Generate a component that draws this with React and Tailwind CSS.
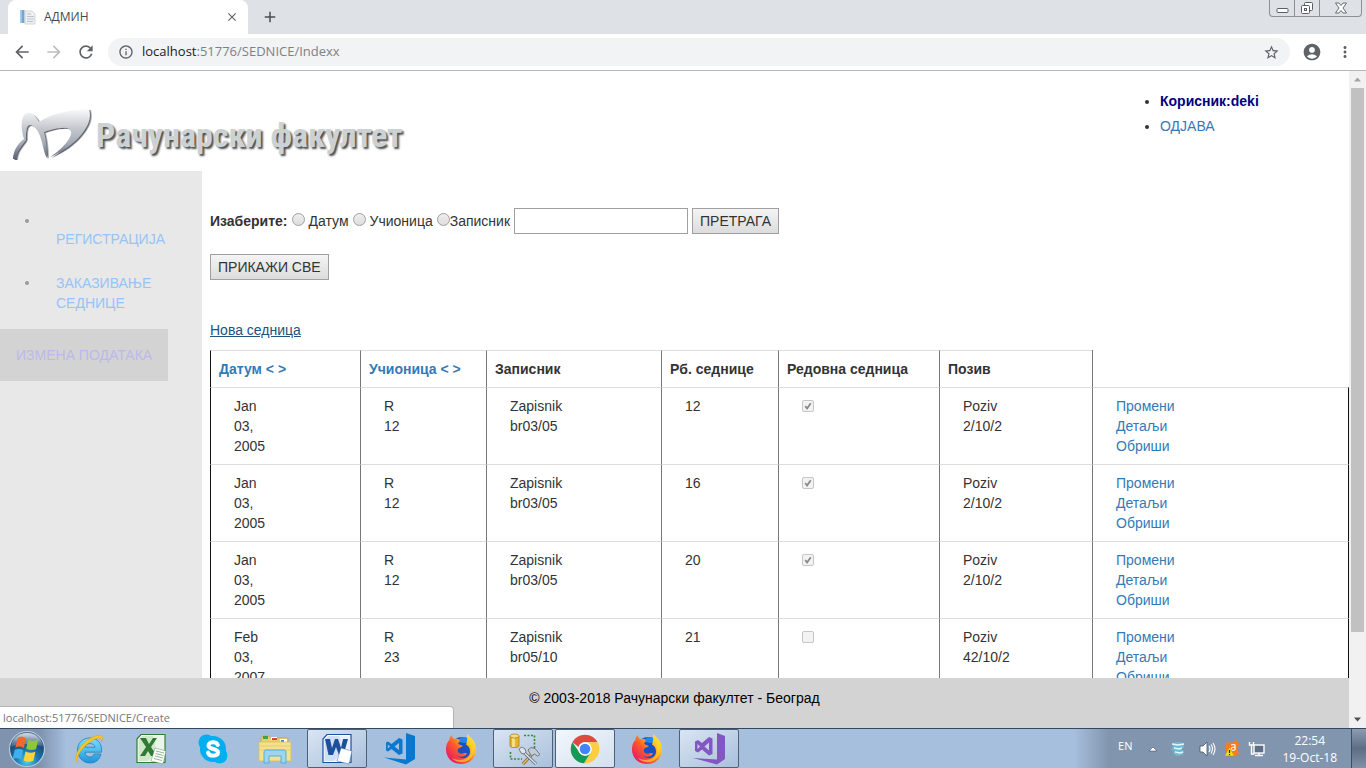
import React from 'react';
import { MdArrowBack, MdArrowForward, MdRefresh, MdInfoOutline, MdStarBorder, MdAccountCircle, MdMoreVert, MdClose, MdAdd } from 'react-icons/md';

const ROWS = [
  { date: ['Jan', '03,', '2005'], room: ['R', '12'], minutes: ['Zapisnik', 'br03/05'], no: 12, regular: true, call: ['Poziv', '2/10/2'] },
  { date: ['Jan', '03,', '2005'], room: ['R', '12'], minutes: ['Zapisnik', 'br03/05'], no: 16, regular: true, call: ['Poziv', '2/10/2'] },
  { date: ['Jan', '03,', '2005'], room: ['R', '12'], minutes: ['Zapisnik', 'br03/05'], no: 20, regular: true, call: ['Poziv', '2/10/2'] },
  { date: ['Feb', '03,', '2007'], room: ['R', '23'], minutes: ['Zapisnik', 'br05/10'], no: 21, regular: false, call: ['Poziv', '42/10/2'] },
];

function Lines({ items }) {
  return items.map((t) => <span key={t} className="block">{t}</span>);
}

/* ---------- browser chrome ---------- */

function TabStrip() {
  return (
    <div className="flex h-[34px] shrink-0 items-start bg-[#dee1e6]">
      <div className="ml-2 flex h-full w-[240px] items-center rounded-t-lg bg-white pr-[9px] pl-3">
        <svg width="16" height="16" viewBox="0 0 16 16" aria-hidden="true">
          <rect x="0.5" y="1" width="4" height="13" fill="#6fa8d6" />
          <rect x="0.5" y="1" width="1.5" height="13" fill="#9cc4e4" />
          <path d="M5 2h7l3 3v10H5z" fill="#eef0f2" stroke="#c9ced3" strokeWidth="0.8" />
          <path d="M7 5h4M7 7.5h7M7 10h7M7 12.5h6" stroke="#b6bdc4" strokeWidth="0.9" />
        </svg>
        <span className="ml-2 flex-1 text-xs text-[#45494d]">АДМИН</span>
        <button aria-label="Затвори картицу" className="text-[#5f6368]"><MdClose size={14} /></button>
      </div>
      <button aria-label="Нова картица" className="mt-2 ml-[13px] text-[#4a4d51]"><MdAdd size={18} /></button>
      <div className="mr-1 ml-auto flex h-[17px] overflow-hidden rounded-b border border-t-0 border-[#8b9097]">
        <button aria-label="Умањи" className="flex w-[25px] items-center justify-center border-r border-[#8b9097]">
          <svg width="13" height="12" viewBox="0 0 13 12"><rect x="1" y="6.5" width="11" height="4" rx="1" fill="#fff" stroke="#5a5f66" /></svg>
        </button>
        <button aria-label="Врати величину" className="flex w-[25px] items-center justify-center border-r border-[#8b9097]">
          <svg width="14" height="14" viewBox="0 0 14 14" fill="#fff" stroke="#5a5f66">
            <rect x="4.500" y="1.500" width="8" height="8" rx="1" />
            <rect x="1.500" y="4.500" width="8" height="8" rx="1" />
            <rect x="4.500" y="7.500" width="2" height="2" />
          </svg>
        </button>
        <button aria-label="Затвори" className="flex w-[41px] items-center justify-center">
          <svg width="14" height="12" viewBox="0 0 14 12"><path d="M1.500 1h3.500l2 2.500L9 1h3.500L9 6l3.500 5H9L7 8.500 5 11H1.500L5 6z" fill="#fff" stroke="#5a5f66" strokeWidth="0.9" /></svg>
        </button>
      </div>
    </div>
  );
}

function Toolbar() {
  return (
    <div className="flex h-[37px] shrink-0 items-center border-b border-[#b4b6b9] bg-white pr-3 pl-3 text-[#5f6368]">
      <button aria-label="Назад"><MdArrowBack size={20} /></button>
      <button aria-label="Напред" className="ml-3 text-[#bcbec1]"><MdArrowForward size={20} /></button>
      <button aria-label="Освежи" className="ml-3"><MdRefresh size={20} /></button>
      <div className="ml-3 flex h-7 flex-1 items-center rounded-full bg-[#f1f3f4] px-[10px]">
        <MdInfoOutline size={16} />
        <span className="ml-2 flex-1 text-[13px] text-[#7d8186]">
          <span className="text-[#202124]">localhost</span>:51776/SEDNICE/Indexx
        </span>
        <button aria-label="Обележи страницу"><MdStarBorder size={17} /></button>
      </div>
      <button aria-label="Профил" className="ml-3"><MdAccountCircle size={20} /></button>
      <button aria-label="Мени" className="ml-[14px]"><MdMoreVert size={18} /></button>
    </div>
  );
}

function Scrollbar() {
  return (
    <div className="flex w-[17px] shrink-0 flex-col items-center bg-[#f1f1f1]" aria-hidden="true">
      <svg className="h-[17px] w-[17px] shrink-0" viewBox="0 0 17 17"><path d="M5 10.500l3.500-4 3.500 4z" fill="#a3a3a3" /></svg>
      <div className="w-[13px] flex-[544_1_0%] bg-[#c1c1c1]" />
      <div className="flex-[79_1_0%]" />
      <svg className="h-[17px] w-[17px] shrink-0" viewBox="0 0 17 17"><path d="M5 6.500l3.500 4 3.500-4z" fill="#505050" /></svg>
    </div>
  );
}

/* ---------- page ---------- */

function Logo() {
  return (
    <div className="flex items-center pt-9 pl-3">
      <svg width="84" height="56" viewBox="0 0 84 56" className="shrink-0" aria-hidden="true">
        <defs>
          <linearGradient id="metal" x1="0" y1="0" x2="0" y2="1">
            <stop offset="0" stopColor="#fafafb" />
            <stop offset="0.4" stopColor="#c3c7cd" />
            <stop offset="0.7" stopColor="#a3aab5" />
            <stop offset="1" stopColor="#596276" />
          </linearGradient>
          <filter id="soft" x="-10%" y="-10%" width="130%" height="130%">
            <feDropShadow dx="1.500" dy="1" stdDeviation="0.7" floodColor="#3a3e46" floodOpacity="0.8" />
          </filter>
        </defs>
        <path
          filter="url(#soft)"
          fill="url(#metal)"
          d="M1 52C1 45 5 37 12 32C9 22 8 9 15 6C20 5 24 10 27 15C38 7 56 3 77 2C80 12 75 21 68 29C61 37 52 44 38 50C46 45 53 38 57 32C62 24 58 20 50 21C44 21 38 23 32 25C34 33 35 42 35 51C32 47 31 37 28 29C26 23 22 18 18 18C14 18 14 25 14 32C12 38 5 41 4 52Z"
        />
      </svg>
      <span className="font-['Roboto_Condensed','Liberation_Sans_Narrow','Liberation_Sans',sans-serif] text-[34px] leading-[56px] font-bold whitespace-nowrap text-[#ccd2d3] [text-shadow:2px_2px_2px_#4a4d50]">
        Рачунарски факултет
      </span>
    </div>
  );
}

function PageHeader() {
  return (
    <header className="flex h-[100px] shrink-0 items-start justify-between">
      <Logo />
      <ul className="w-[189px] list-disc pt-5 leading-5 text-[#333]">
        <li className="mb-[5px]"><b className="text-[#00007f]">Корисник:deki</b></li>
        <li><a href="#odjava" className="text-[#337ab7]">ОДЈАВА</a></li>
      </ul>
    </header>
  );
}

function Sidebar() {
  return (
    <nav className="w-[202px] shrink-0 bg-[#e8e8e8] pt-10 leading-5">
      <ul className="pr-4 pl-[25px] text-[#94c4f8]">
        <li className="mb-6 flex gap-[27px]">
          <span className="mt-2 h-1 w-1 shrink-0 rounded-full bg-[#999]" />
          <a href="#registracija" className="pt-[18px]">РЕГИСТРАЦИЈА</a>
        </li>
        <li className="flex gap-[27px]">
          <span className="mt-2 h-1 w-1 shrink-0 rounded-full bg-[#999]" />
          <a href="#zakazivanje">ЗАКАЗИВАЊЕ СЕДНИЦЕ</a>
        </li>
      </ul>
      <a href="#izmena" className="mt-4 block w-[168px] bg-[#d3d3d3] p-4 whitespace-nowrap text-[#bdb8ec]">ИЗМЕНА ПОДАТАКА</a>
    </nav>
  );
}

function Radio({ id }) {
  return (
    <input
      id={id}
      type="radio"
      name="kriterijum"
      className="mb-1 h-[13px] w-[13px] appearance-none rounded-full border border-[#a0a0a0] bg-linear-to-b from-[#eee] to-[#ddd] checked:bg-[#777]"
    />
  );
}

const BTN = 'h-[26px] border border-[#a0a0a0] bg-linear-to-b from-[#f4f4f4] to-[#dcdcdc] px-[7px] leading-5 whitespace-nowrap text-[#333]';

function SearchForm() {
  return (
    <form onSubmit={(e) => e.preventDefault()}>
      <div className="flex items-center gap-1">
        <b>Изаберите:</b>
        <Radio id="r-datum" />
        <label htmlFor="r-datum">Датум</label>
        <Radio id="r-ucionica" />
        <label htmlFor="r-ucionica">Учионица</label>
        <span className="flex items-center">
          <Radio id="r-zapisnik" />
          <label htmlFor="r-zapisnik">Записник</label>
        </span>
        <input type="text" aria-label="Појам за претрагу" className="h-[26px] w-[174px] border border-[#a0a0a0] bg-white px-1" />
        <button type="submit" className={BTN}>ПРЕТРАГА</button>
      </div>
      <button type="button" className={`${BTN} mt-5 block`}>ПРИКАЖИ СВЕ</button>
    </form>
  );
}

const TH = 'border-t border-l border-t-[#ddd] border-l-[#777] p-2 first:border-l-[#111]';
const TD = 'border-t border-l border-t-[#ddd] border-l-[#777] py-2 pr-2 pl-[23px] first:border-l-[#111] last:border-r last:border-r-[#111]';

function SessionsTable() {
  return (
    <table className="w-full table-fixed border-separate border-spacing-0 text-left">
      <colgroup>
        <col className="w-[150px]" />
        <col className="w-[126px]" />
        <col className="w-[175px]" />
        <col className="w-[117px]" />
        <col className="w-[161px]" />
        <col className="w-[153px]" />
        <col />
      </colgroup>
      <thead>
        <tr>
          <th className={TH}><a href="#datum" className="text-[#337ab7]">Датум &lt; &gt;</a></th>
          <th className={TH}><a href="#ucionica" className="text-[#337ab7]">Учионица &lt; &gt;</a></th>
          <th className={TH}>Записник</th>
          <th className={TH}>Рб. седнице</th>
          <th className={TH}>Редовна седница</th>
          <th className={TH}>Позив</th>
          <td className="border-l border-[#777]" />
        </tr>
      </thead>
      <tbody className="align-top">
        {ROWS.map((r) => (
          <tr key={r.no}>
            <td className={TD}><Lines items={r.date} /></td>
            <td className={TD}><Lines items={r.room} /></td>
            <td className={TD}><Lines items={r.minutes} /></td>
            <td className={TD}>{r.no}</td>
            <td className={TD}>
              <span className="grid h-5 w-3 items-center">
                <input
                  type="checkbox"
                  disabled
                  checked={r.regular}
                  readOnly
                  aria-label={`Редовна седница ${r.no}`}
                  className="col-start-1 row-start-1 h-3 w-3 appearance-none rounded-xs border border-[#c6c6c6] bg-[#f3f3f3]"
                />
                {r.regular && (
                  <svg className="col-start-1 row-start-1" width="12" height="12" viewBox="0 0 13 13" aria-hidden="true">
                    <path d="M3.500 6.500l2 2.700L9.500 3.500" fill="none" stroke="#8a8a8a" strokeWidth="2" />
                  </svg>
                )}
              </span>
            </td>
            <td className={TD}><Lines items={r.call} /></td>
            <td className={TD}>
              <a href="#promeni" className="block text-[#337ab7]">Промени</a>
              <a href="#detalji" className="block text-[#337ab7]">Детаљи</a>
              <a href="#obrisi" className="block text-[#337ab7]">Обриши</a>
            </td>
          </tr>
        ))}
      </tbody>
    </table>
  );
}

function Page() {
  return (
    <div className="relative flex min-w-0 flex-1 flex-col bg-white font-['Liberation_Sans',Arial,sans-serif] text-sm leading-5 text-[#333]">
      <div className="flex min-h-0 flex-1 flex-col overflow-hidden">
        <PageHeader />
        <div className="flex min-h-0 flex-1">
          <Sidebar />
          <main className="min-w-0 flex-1 pt-[37px] pl-2">
            <SearchForm />
            <a href="#nova" className="mt-10 mb-[10px] block w-fit text-[#23527c] underline">Нова седница</a>
            <SessionsTable />
          </main>
        </div>
      </div>
      <footer className="z-10 h-[50px] shrink-0 bg-[#d3d3d3] pt-[10px] text-center text-black">© 2003-2018 Рачунарски факултет - Београд</footer>
      <div className="absolute bottom-0 left-0 z-20 flex h-[22px] w-[454px] items-center rounded-tr border-t border-r border-[#b5b5b5] bg-white pl-[3px] font-['Open_Sans','Noto_Sans',sans-serif] text-[11px] text-[#73777b]">
        localhost:51776/SEDNICE/Create
      </div>
    </div>
  );
}

/* ---------- taskbar ---------- */

function StartOrb() {
  return (
    <svg width="38" height="38" viewBox="0 0 38 38">
      <defs>
        <radialGradient id="orb" cx="0.5" cy="0.85" r="0.8">
          <stop offset="0" stopColor="#4fd0f5" />
          <stop offset="0.4" stopColor="#1b77ae" />
          <stop offset="0.8" stopColor="#1a4470" />
          <stop offset="1" stopColor="#55738f" />
        </radialGradient>
        <linearGradient id="gloss" x1="0" y1="0" x2="0" y2="1">
          <stop offset="0" stopColor="#fff" stopOpacity="0.75" />
          <stop offset="1" stopColor="#fff" stopOpacity="0.12" />
        </linearGradient>
      </defs>
      <circle cx="19" cy="19" r="17.500" fill="url(#orb)" stroke="#b5cbdd" strokeWidth="1.200" />
      <path d="M3 17C4 8 11 3 19 3s15 5 16 14c-8-4-24-4-32 0z" fill="url(#gloss)" />
      <g transform="translate(-5.2 -5.2) scale(1.3)">
        <path d="M11.500 10c2.500-1.300 4.500-.8 6.300.5l-1.600 7.300c-2-1.200-4-1.600-6.500-.4z" fill="#f2672a" />
        <path d="M19.500 11.300c2.500 1.300 5 1.300 7.800.2l-1.700 7.200c-2.600 1.200-5 .9-7.600-.3z" fill="#8fc63f" />
        <path d="M9.200 19.200c2.400-1.100 4.500-.7 6.500.4l-1.600 7.200c-2-1.200-4-1.600-6.500-.4z" fill="#3fb0ec" />
        <path d="M17.500 20.500c2.500 1.200 5 1.300 7.600.2l-1.600 7c-2.500 1.100-5 1.100-7.500-.2z" fill="#fdd23a" />
      </g>
    </svg>
  );
}

function IeIcon() {
  return (
    <svg width="32" height="32" viewBox="0 0 32 32">
      <defs>
        <linearGradient id="ie" x1="0" y1="0" x2="0" y2="1">
          <stop offset="0" stopColor="#7fdcfa" /><stop offset="0.5" stopColor="#4dbdf0" /><stop offset="1" stopColor="#1c92d8" />
        </linearGradient>
      </defs>
      <path fillRule="evenodd" d="M17 5C9 5 4.500 10.500 4.500 17S9.500 30 17 30c5.500 0 9.500-3 11-9h-7c-.8 2.200-2.200 3-4 3-3 0-4.700-1.800-5-4.800H28.500C29.500 10 24 5 17 5zM12 14.200C12.400 11.800 14.200 10.600 17 10.600s4.600 1.200 5 3.600z" fill="url(#ie)" stroke="#2280bd" strokeWidth="0.8" />
      <path d="M5 29.500C-1 26 6 12 17 5.500 23 2 28.500 1 29.500 4c.4 1.500-.2 3.500-1 5 .2-2.500-.5-4-2.500-4-6 0-21 12-21.500 20.500 0 1.500.1 2.900.5 4z" fill="#f9c81f" stroke="#d9a30c" strokeWidth="0.5" />
    </svg>
  );
}

function OfficeIcon({ letter, dark, light }) {
  return (
    <svg width="32" height="32" viewBox="0 0 32 32">
      <path d="M6 1.500h24v28H2V6z" fill="#fff" stroke={dark} strokeWidth="1.200" />
      <path d="M7 3h21.500v25h-25V7z" fill={light} />
      <path d="M18 3h10.500v25H12C20 23 23 14 18 3z" fill="#fff" opacity="0.55" />
      {letter === 'X'
        ? <path d="M5 5h6l3 6 4-6h4l-6 9 6 9h-6l-3-5-3 5H5l6-9z" fill={dark} />
        : <path d="M4 6h5l2 9 3-9h3l3 9 2-9h5l-4.500 16h-4.500L15 14l-3 8H7.500z" fill={dark} />}
      <path d="M20 15l11 3-3 13-12-3z" fill="#fff" stroke={dark} strokeWidth="0.4" />
      {letter === 'X' && <path d="M21 18l8 2M20.500 20.500l8 2M20 23l8 2M19 25.500l8 2" stroke={dark} strokeWidth="0.9" opacity="0.6" />}
    </svg>
  );
}

function SkypeIcon() {
  return (
    <svg width="32" height="32" viewBox="0 0 32 32">
      <circle cx="16" cy="16" r="13" fill="#00aff0" />
      <circle cx="9.500" cy="9.500" r="8" fill="#00aff0" />
      <circle cx="22.500" cy="22.500" r="8" fill="#00aff0" />
      <path d="M20.800 12C20 10 18.300 9.300 16.200 9.300c-2.800 0-4.700 1.200-4.700 3.100 0 4.400 9.500 2.700 9.500 6.900 0 2.300-2.100 3.400-4.800 3.400-2.500 0-4.500-.8-5.200-3.100" fill="none" stroke="#fff" strokeWidth="4" strokeLinecap="round" />
    </svg>
  );
}

function FolderIcon() {
  return (
    <svg width="34" height="32" viewBox="0 0 34 32">
      <path d="M3 5l2-2h6l2 2h17v22H3z" fill="#e9cf74" stroke="#c8a548" strokeWidth="0.8" />
      <rect x="5" y="3" width="5" height="3" fill="#3aa547" /><rect x="13" y="4" width="6" height="3" fill="#fff" />
      <rect x="14" y="5" width="5" height="2" fill="#d8443c" /><rect x="22" y="6" width="7" height="3" fill="#fff" /><rect x="23" y="7" width="3" height="2" fill="#3c87d8" />
      <path d="M1 9h32v19H1z" fill="#f5e08e" stroke="#d9bd62" strokeWidth="0.8" />
      <path d="M2 13h30M2 17h30" stroke="#eacb70" />
      <path d="M6 30V19q0-2 2-2h18q2 0 2 2v11h-5v-7H11v7z" fill="#9bd5f2" stroke="#4ca8d8" strokeWidth="0.9" />
    </svg>
  );
}

function VsCodeIcon() {
  return (
    <svg width="34" height="34" viewBox="0 0 34 34">
      <path d="M24 1l9 3v23l-9 5.500L2 25.500l22 2z" fill="#0879cf" />
      <path fillRule="evenodd" d="M17 6l3.500 1.500v14L17 23l-7.500-6L6 19.500l-2-1v-8l2-1L9.500 12zM17 11l-4.500 3.500L17 18zM5.800 12.500v4L8 14.500z" fill="#0879cf" />
    </svg>
  );
}

function FirefoxIcon({ uid }) {
  return (
    <svg width="32" height="32" viewBox="0 0 32 32">
      <defs>
        <linearGradient id={uid} x1="1" y1="0.1" x2="0.1" y2="0.9">
          <stop offset="0" stopColor="#fff04a" /><stop offset="0.3" stopColor="#ffc21f" />
          <stop offset="0.6" stopColor="#ff5a2a" /><stop offset="1" stopColor="#e3156b" />
        </linearGradient>
      </defs>
      <circle cx="17" cy="15" r="11" fill="#1b4fc4" />
      <path d="M15 5c3-2 8-1 10 3l-5 2-6-1z" fill="#2387ea" />
      <path d="M22 1c4 3 9 8 9 15.500C31 25 24.500 31 16 31S1 25 1 16.500C1 11 3 8.500 4.500 7 4.500 5 5.500 3 6.500 2c.5 2 1.500 3 3 4 2.500-.6 4 0 5.500 1l-2 4 5 2-4.500 2.500c-1 1-1.500 3 .5 4.500 3 2 6-1 8 .5-2 4-7 4-10 2 4 5 13 3 13-4 0-4-2-6-4-7 1-3 1.500-5.500 1-8.500z" fill={`url(#${uid})`} />
      <path d="M25 7c5 4 6 15-1 20-6 4-14 2-17-2 7 4 17 2 19-6 1-5-1-8-1-12z" fill="#ffd52e" opacity="0.65" />
    </svg>
  );
}

function SqlIcon() {
  return (
    <svg width="34" height="34" viewBox="0 0 34 34">
      <path d="M4 4v10c0 2 9 2 9 0V4z" fill="#e6b52c" stroke="#a27912" strokeWidth="0.7" />
      <rect x="6" y="5" width="3" height="10" fill="#fce79a" opacity="0.8" />
      <ellipse cx="8.500" cy="4" rx="4.500" ry="2" fill="#f7dc7b" stroke="#a27912" strokeWidth="0.7" />
      <path d="M18 3.500h10.500V16M4.500 20v7H16" fill="none" stroke="#2f8a34" strokeWidth="1.600" strokeDasharray="2 1.500" />
      <path d="M28 20L17 32" stroke="#8a6a2c" strokeWidth="3.200" />
      <path d="M28 20L17 32" stroke="#e0bb62" strokeWidth="1.600" />
      <path d="M16 18.500l14 13.500" stroke="#5c6670" strokeWidth="3" />
      <path d="M16 18.500l14 13.500" stroke="#dfe5e9" strokeWidth="1.500" />
      <path d="M13 17l2 4 3 1 2-2-1-3-3-2z" fill="#dfe5e9" stroke="#5c6670" strokeWidth="0.8" />
      <path d="M22 18l3-2.500 4 1 5 6-2.500 1.500-3-2-3 2z" fill="#c3ccd3" stroke="#5c6670" strokeWidth="0.8" />
    </svg>
  );
}

function ChromeIcon() {
  return (
    <svg width="32" height="32" viewBox="0 0 48 48">
      <path d="M5 14A21.500 21.500 0 0 1 43 14H24a10 10 0 0 0-9.500 7z" fill="#dd4b3e" />
      <path d="M43 14a21.500 21.500 0 0 1-20.500 31.500L32.500 29a10 10 0 0 0-8.500-15z" fill="#ffcd42" />
      <path d="M5 14a21.500 21.500 0 0 0 17.500 31.500L32 30a10 10 0 0 1-17-2z" fill="#159957" />
      <circle cx="24" cy="24" r="10" fill="#fff" />
      <circle cx="24" cy="24" r="8" fill="#4285f4" />
    </svg>
  );
}

function VisualStudioIcon() {
  return (
    <svg width="34" height="34" viewBox="0 0 34 34">
      <path d="M25 1l8 3v23l-8 5.500L1 26l24 1.500z" fill="#8257c2" />
      <path fillRule="evenodd" d="M17 5l3.500 1.500v15.500L17 23.500 10 17.500 6 20.500l-3-1.500V9.500L6 8l4 3zM17 10.500l-4.500 4 4.500 4zM5.500 12v5L8 14.500z" fill="#8257c2" />
    </svg>
  );
}

const APPS = [
  { name: 'Internet Explorer', icon: <IeIcon /> },
  { name: 'Excel', icon: <OfficeIcon letter="X" dark="#2f7a35" light="#cfe8c8" /> },
  { name: 'Skype', icon: <SkypeIcon /> },
  { name: 'Explorer', icon: <FolderIcon /> },
  { name: 'Word', icon: <OfficeIcon letter="W" dark="#1c4f9c" light="#cfdff4" />, open: true },
  { name: 'VS Code', icon: <VsCodeIcon /> },
  { name: 'Firefox', icon: <FirefoxIcon uid="ff1" /> },
  { name: 'SQL Server', icon: <SqlIcon />, open: true },
  { name: 'Chrome', icon: <ChromeIcon />, open: true, active: true },
  { name: 'Firefox Developer', icon: <FirefoxIcon uid="ff2" /> },
  { name: 'Visual Studio', icon: <VisualStudioIcon />, open: true },
];

function appClass(app) {
  const base = 'flex h-full w-[60px] items-center justify-center rounded-xs border ';
  if (app.active) return base + 'border-[#4d6078] bg-linear-to-br from-[#f3f7fc] to-[#d3e0ef]';
  if (app.open) return base + 'border-[#4d6078] bg-linear-to-br from-[#d9e5f3] to-[#a9c0db]';
  return base + 'border-transparent';
}

function Tray() {
  return (
    <div className="ml-auto flex h-full items-center bg-linear-to-r from-[#a6bfdd] to-[#8295ae] to-12% pl-11 text-white">
      <span className="mb-1 text-[11px]">EN</span>
      <button aria-label="Скривене иконе" className="ml-4">
        <svg width="10" height="6" viewBox="0 0 10 6"><path d="M1 5l4-4 4 4z" fill="#fff" stroke="#44546a" strokeWidth="0.6" /></svg>
      </button>
      <svg className="ml-3" width="16" height="16" viewBox="0 0 16 16">
        <path d="M2 2l6-1 6 1v4l-3 2 3 2-1 4-6 1-4-2 1-3-3-1 2-3z" fill="#6fb9d3" />
        <path d="M2 3l6 1 6-1M4 7l5 1 3-1M5 11l5 1 3-1" stroke="#dff7fc" strokeWidth="1.400" fill="none" />
      </svg>
      <svg className="ml-[13px]" width="17" height="16" viewBox="0 0 17 16">
        <path d="M1 5h3l4-4v14l-4-4H1z" fill="#fff" stroke="#47566a" strokeWidth="0.8" />
        <path d="M10 5q2 3 0 6M12 3.500q3 4.500 0 9M14 2q4 6 0 12" fill="none" stroke="#fff" strokeWidth="1.100" />
      </svg>
      <svg className="ml-2" width="16" height="17" viewBox="0 0 16 17">
        <path d="M3 2l4 1 6-3 2 5-2 4 2 5-5 2-7-2-2-6z" fill="#ff7a1a" />
        <path d="M7 5q3-1 4 0v5M11 7q-4 0-4 2t4 1" fill="none" stroke="#fff" strokeWidth="1.200" />
        <path d="M5.500 7l5 9H0.500z" fill="#ffd52e" stroke="#b88b00" strokeWidth="0.6" />
        <path d="M5.500 10v3M5.500 14v1" stroke="#222" strokeWidth="1.200" />
      </svg>
      <svg className="ml-2" width="17" height="16" viewBox="0 0 17 16">
        <rect x="6" y="4" width="10" height="8" fill="#5c6f86" stroke="#fff" strokeWidth="1.400" />
        <path d="M7 14.500h8M11 12v2M1.500 1v3h4V1M3.500 4v9h3" fill="none" stroke="#fff" strokeWidth="1.400" />
      </svg>
      <div className="ml-[17px] text-center text-xs leading-[17px]">
        <div>22:54</div>
        <div>19-Oct-18</div>
      </div>
      <button aria-label="Прикажи радну површину" className="ml-[14px] h-full w-[15px] border-l border-[#3e4d61] bg-linear-to-b from-[#8c9db3] via-[#5c6d84] to-[#8192a8]" />
    </div>
  );
}

function Taskbar() {
  return (
    <div className="flex h-10 shrink-0 items-center border-t border-[#33475e] bg-[#a6bfdd]">
      <div className="flex h-full items-center bg-linear-to-r from-[#7f93ae] from-60% to-[#a6bfdd] pr-5 pl-2">
        <button aria-label="Старт"><StartOrb /></button>
      </div>
      <div className="-ml-[7px] flex h-full gap-[2px]">
        {APPS.map((app) => (
          <button key={app.name} aria-label={app.name} className={appClass(app)}>{app.icon}</button>
        ))}
      </div>
      <Tray />
    </div>
  );
}

export default function App() {
  return (
    <div className="flex h-screen flex-col overflow-hidden font-['Open_Sans','Noto_Sans',sans-serif]">
      <TabStrip />
      <Toolbar />
      <div className="flex min-h-0 flex-1">
        <Page />
        <Scrollbar />
      </div>
      <Taskbar />
    </div>
  );
}
